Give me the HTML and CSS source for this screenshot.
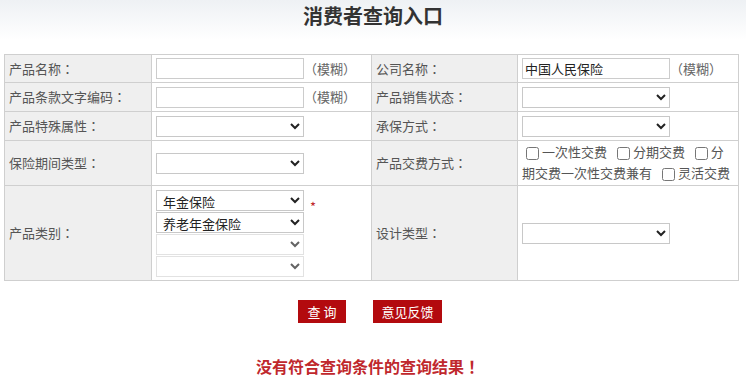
FILE: index.html
```html
<!DOCTYPE html>
<html lang="zh-CN">
<head>
<meta charset="utf-8">
<title>消费者查询入口</title>
<link rel="stylesheet" href="styles.css">
</head>
<body>
<div class="header">
  <h1 class="title">消费者查询入口</h1>
</div>
<table class="form-table">
  <colgroup>
    <col class="c1"><col class="c2"><col class="c3"><col class="c4">
  </colgroup>
  <tr class="r1">
    <td class="label">产品名称<span class="p" lang="zh-TW">：</span></td>
    <td class="field"><input class="txt" type="text"><span class="hint"><span class="p" lang="zh-TW">（</span>模糊<span class="p" lang="zh-TW">）</span></span></td>
    <td class="label">公司名称<span class="p" lang="zh-TW">：</span></td>
    <td class="field"><input class="txt" type="text" value="中国人民保险"><span class="hint"><span class="p" lang="zh-TW">（</span>模糊<span class="p" lang="zh-TW">）</span></span></td>
  </tr>
  <tr class="r2">
    <td class="label">产品条款文字编码<span class="p" lang="zh-TW">：</span></td>
    <td class="field"><input class="txt" type="text"><span class="hint"><span class="p" lang="zh-TW">（</span>模糊<span class="p" lang="zh-TW">）</span></span></td>
    <td class="label">产品销售状态<span class="p" lang="zh-TW">：</span></td>
    <td class="field"><select class="sel"><option></option></select></td>
  </tr>
  <tr class="r3">
    <td class="label">产品特殊属性<span class="p" lang="zh-TW">：</span></td>
    <td class="field"><select class="sel"><option></option></select></td>
    <td class="label">承保方式<span class="p" lang="zh-TW">：</span></td>
    <td class="field"><select class="sel"><option></option></select></td>
  </tr>
  <tr class="r4">
    <td class="label">保险期间类型<span class="p" lang="zh-TW">：</span></td>
    <td class="field"><select class="sel"><option></option></select></td>
    <td class="label">产品交费方式<span class="p" lang="zh-TW">：</span></td>
    <td class="field checks"><input type="checkbox" class="cb">一次性交费 <input type="checkbox" class="cb">分期交费 <input type="checkbox" class="cb">分期交费一次性交费兼有 <input type="checkbox" class="cb">灵活交费</td>
  </tr>
  <tr class="r5">
    <td class="label">产品类别<span class="p" lang="zh-TW">：</span></td>
    <td class="field">
      <div class="cat">
        <div class="stack">
          <select class="sel"><option>年金保险</option></select>
          <select class="sel"><option>养老年金保险</option></select>
          <select class="sel" disabled><option></option></select>
          <select class="sel" disabled><option></option></select>
        </div>
        <span class="req">*</span>
      </div>
    </td>
    <td class="label">设计类型<span class="p" lang="zh-TW">：</span></td>
    <td class="field"><select class="sel"><option></option></select></td>
  </tr>
</table>
<div class="actions">
  <button class="btn btn-q" type="button">查 询</button>
  <button class="btn btn-f" type="button">意见反馈</button>
</div>
<p class="result">没有符合查询条件的查询结果<span class="p" lang="zh-TW">！</span></p>
</body>
</html>
```
FILE: styles.css
```css
html, body {
  margin: 0;
  padding: 0;
  background: #fff;
  font-family: "Microsoft YaHei", "Noto Sans CJK SC", "Noto Sans", sans-serif;
  font-size: 13px;
  color: #555;
}
.p {
  font-family: "Noto Sans CJK TC", "Noto Sans CJK SC", sans-serif;
}
.header {
  height: 54px;
  background: linear-gradient(#eef1f4 0px, #ffffff 40px);
}
.title {
  margin: 0;
  font-size: 20px;
  line-height: 32px;
  font-weight: bold;
  color: #333;
  text-align: center;
}
.form-table {
  margin-left: 4px;
  width: 734px;
  table-layout: fixed;
  border-collapse: collapse;
  border: 1px solid #cfcfcf;
}
.c1 { width: 147px; }
.c2 { width: 220px; }
.c3 { width: 146px; }
.c4 { width: 221px; }
.form-table td {
  border: 1px solid #cfcfcf;
  padding: 0 4px;
  vertical-align: middle;
  line-height: 20px;
}
.r1 td { height: 27px; }
.r2 td { height: 28px; }
.r3 td { height: 28px; }
.r4 td { height: 44px; }
.r5 td { height: 94px; }
.label {
  background: #efefef;
  color: #555;
  white-space: nowrap;
}
.field {
  background: #fff;
}
.txt {
  box-sizing: border-box;
  width: 148px;
  height: 21px;
  border: 1px solid #cccccc;
  padding: 0 2px;
  margin: 0;
  font: 13px "Microsoft YaHei", "Noto Sans CJK SC", sans-serif;
  color: #222;
  vertical-align: middle;
}
.hint {
  color: #666;
  vertical-align: middle;
}
.sel {
  box-sizing: border-box;
  width: 148px;
  height: 21px;
  border: 1px solid #c8c8c8;
  border-radius: 0;
  background: #fff;
  margin: 0;
  padding: 0 2px;
  font: 13px "Microsoft YaHei", "Noto Sans CJK SC", sans-serif;
  color: #222;
  vertical-align: middle;
}
.sel:disabled {
  background: #fff;
  border-color: #d6d6d6;
}
.form-table td.checks {
  color: #555;
  padding-right: 4px;
  word-spacing: 3px;
}
.cb {
  width: 13px;
  height: 13px;
  margin: 3px 3px 3px 4px;
  vertical-align: -3px;
}
.cat {
  display: flex;
  align-items: flex-start;
}
.stack {
  display: flex;
  flex-direction: column;
  gap: 1px;
}
.req {
  color: #c0282d;
  font-size: 13px;
  line-height: 13px;
  margin: 10px 0 0 6px;
}
.actions {
  display: flex;
  justify-content: center;
  gap: 27px;
  margin-top: 19px;
  padding-right: 6px;
}
.btn {
  height: 23px;
  border: none;
  padding: 0;
  margin: 0;
  background: #b30a0e;
  color: #fff;
  font: 13px "Microsoft YaHei", "Noto Sans CJK SC", sans-serif;
  line-height: 23px;
  cursor: pointer;
}
.btn-q { width: 48px; }
.btn-f { width: 69px; }
.result {
  margin: 31px 0 0;
  text-align: center;
  font-size: 16px;
  line-height: 24px;
  font-weight: bold;
  color: #c0282d;
  padding-right: 10px;
}
```
